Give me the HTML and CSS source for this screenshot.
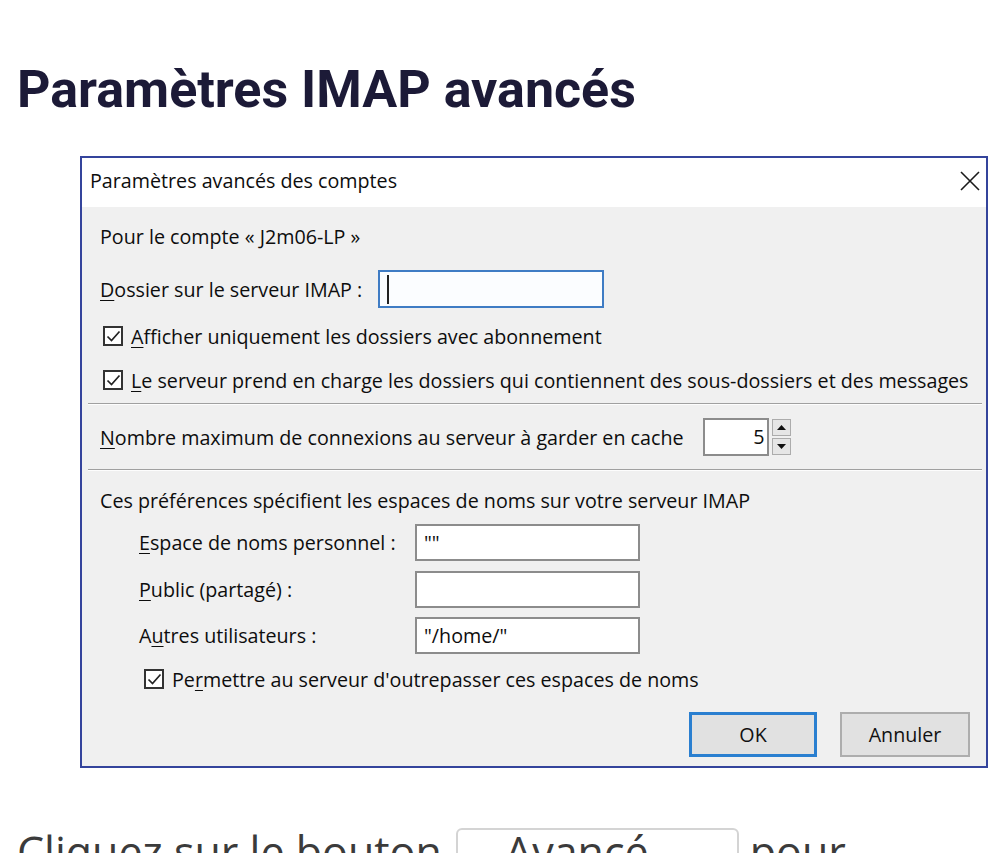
FILE: index.html
```html
<!DOCTYPE html>
<html lang="fr">
<head>
 <meta charset="UTF-8">
 <meta name="viewport" content="width=device-width, initial-scale=1.0">
 <title>Paramètres IMAP avancés</title>
 <link rel="stylesheet" href="styles.css">
</head>
<body>

 <h1 class="page-title">Paramètres IMAP avancés</h1>

 <!-- Fenetre de dialogue -->
 <div class="dialog">
 <div class="dialog-title">
 <span>Paramètres avancés des comptes</span>
 <svg class="close-x" width="20" height="20" viewBox="0 0 20 20">
 <path d="M1 1 L19 19 M19 1 L1 19" stroke="#1a1a1a" stroke-width="1.6" fill="none"/>
 </svg>
 </div>

 <div class="dialog-body">
 <div class="row row-account">Pour le compte « J2m06-LP »</div>

 <div class="row row-folder">
 <span><u>D</u>ossier sur le serveur IMAP :</span>
 <div class="field field-focus"><span class="caret"></span></div>
 </div>

 <div class="row row-check1">
 <span class="checkbox"><svg width="17" height="17" viewBox="0 0 17 17"><path d="M2.5 8.5 L6.5 12.5 L14.5 3.5" stroke="#222" stroke-width="1.7" fill="none"/></svg></span>
 <span><u>A</u>fficher uniquement les dossiers avec abonnement</span>
 </div>

 <div class="row row-check2">
 <span class="checkbox"><svg width="17" height="17" viewBox="0 0 17 17"><path d="M2.5 8.5 L6.5 12.5 L14.5 3.5" stroke="#222" stroke-width="1.7" fill="none"/></svg></span>
 <span><u>L</u>e serveur prend en charge les dossiers qui contiennent des sous-dossiers et des messages</span>
 </div>

 <div class="separator"></div>

 <div class="row row-cache">
 <span><u>N</u>ombre maximum de connexions au serveur à garder en cache</span>
 <div class="field field-spin">5</div>
 <div class="spin-btns">
 <span class="spin-btn"><svg width="9" height="5" viewBox="0 0 9 5"><path d="M0 5 L4.5 0 L9 5 Z" fill="#111"/></svg></span>
 <span class="spin-btn"><svg width="9" height="5" viewBox="0 0 9 5"><path d="M0 0 L4.5 5 L9 0 Z" fill="#111"/></svg></span>
 </div>
 </div>

 <div class="separator"></div>

 <div class="row row-ns">Ces préférences spécifient les espaces de noms sur votre serveur IMAP</div>

 <div class="ns-grid">
 <span><u>E</u>space de noms personnel :</span>
 <div class="field">""</div>
 <span><u>P</u>ublic (partagé) :</span>
 <div class="field"></div>
 <span>A<u>u</u>tres utilisateurs :</span>
 <div class="field">"/home/"</div>
 </div>

 <div class="row row-check3">
 <span class="checkbox"><svg width="17" height="17" viewBox="0 0 17 17"><path d="M2.5 8.5 L6.5 12.5 L14.5 3.5" stroke="#222" stroke-width="1.7" fill="none"/></svg></span>
 <span>Pe<u>r</u>mettre au serveur d'outrepasser ces espaces de noms</span>
 </div>

 <div class="buttons">
 <button class="win-btn default">OK</button>
 <button class="win-btn">Annuler</button>
 </div>
 </div>
 </div>

 <p class="intro">Cliquez sur le bouton <span class="fake-btn">Avancé...</span> pour</p>

</body>
</html>
```

FILE: styles.css
```css
/* Page */
body {
margin: 0;
padding: 0 17px;
background: #fff;
overflow: hidden;
}

.page-title {
font-family: Roboto, "Liberation Sans", sans-serif;
font-weight: 700;
font-size: 52px;
line-height: 62px;
color: #1c1a37;
margin: 59px 0 0;
}

/* Dialogue */
.dialog {
box-sizing: border-box;
width: 908px;
margin: 35px 0 0 63px;
border: 2px solid #34449c;
font-family: "Open Sans", sans-serif;
font-size: 19.7px;
color: #0d0d0d;
}

.dialog u {
text-decoration-thickness: 1px;
text-underline-offset: 3px;
}

.dialog-title {
display: flex;
align-items: center;
justify-content: space-between;
height: 49px;
padding: 0 6px 4px 8px;
box-sizing: border-box;
background: #fff;
}

.close-x {
display: block;
}

.dialog-body {
background: #f0f0f0;
padding: 0 16px 9px 18px;
}

.row {
display: flex;
align-items: center;
}

.row-account { height: 58px; }
.row-folder { height: 48px; gap: 16px; }
.row-check1 { height: 46px; }
.row-check2 { height: 42px; }
.row-cache { height: 64px; }
.row-ns { height: 53px; padding-top: 6px; box-sizing: border-box; }
.row-check3 { height: 50px; padding-left: 41px; }

.separator {
height: 0;
margin: 2px -12px 0 -12px;
border-top: 1px solid #a0a0a0;
border-bottom: 1px solid #fdfdfd;
}

.row-cache + .separator {
margin-top: 0;
}

/* Champs */
.field {
box-sizing: border-box;
width: 225px;
height: 37px;
border: 2px solid #8c8c8c;
background: #fff;
padding: 0 7px;
line-height: 33px;
}

.field-focus {
width: 226px;
height: 38px;
border-color: #3f7cc4;
background: #fbfdff;
display: flex;
align-items: center;
}

.caret {
display: block;
width: 2px;
height: 29px;
background: #222;
}

.field-spin {
width: 66px;
height: 38px;
margin-left: 19px;
text-align: right;
padding: 0 2px 0 0;
line-height: 34px;
}

.spin-btns {
display: flex;
flex-direction: column;
gap: 2px;
margin-left: 3px;
}

.spin-btn {
box-sizing: border-box;
width: 19px;
height: 17px;
display: flex;
align-items: center;
justify-content: center;
background: #e6e6e6;
border: 1px solid #acacac;
}

.checkbox {
box-sizing: border-box;
width: 20px;
height: 20px;
margin: 0 8px 0 3px;
border: 2px solid #333;
background: #fff;
display: flex;
align-items: center;
justify-content: center;
}

.checkbox svg {
display: block;
flex: none;
}

.ns-grid {
display: grid;
grid-template-columns: 276px 225px;
grid-auto-rows: 37px;
row-gap: 9.5px;
align-items: center;
padding-left: 39px;
}

/* Boutons */
.buttons {
display: flex;
justify-content: flex-end;
gap: 23px;
margin-top: 8px;
}

.win-btn {
box-sizing: border-box;
width: 130px;
height: 45px;
font-family: "Open Sans", sans-serif;
font-size: 19.7px;
color: #111;
background: #e1e1e1;
border: 2px solid #adadad;
}

.win-btn.default {
width: 128px;
border: 3px solid #2a7fd0;
}

/* Texte sous la capture */
.intro {
margin: 54px 0 0;
font-family: "Open Sans", sans-serif;
font-size: 43px;
line-height: 60px;
color: #3b3b3b;
white-space: nowrap;
}

.fake-btn {
display: inline-block;
margin-left: 3px;
line-height: 40px;
padding: 2px 54px 0 47px;
border: 2px solid #d4d4d4;
border-radius: 6px;
background: #fff;
}
```
